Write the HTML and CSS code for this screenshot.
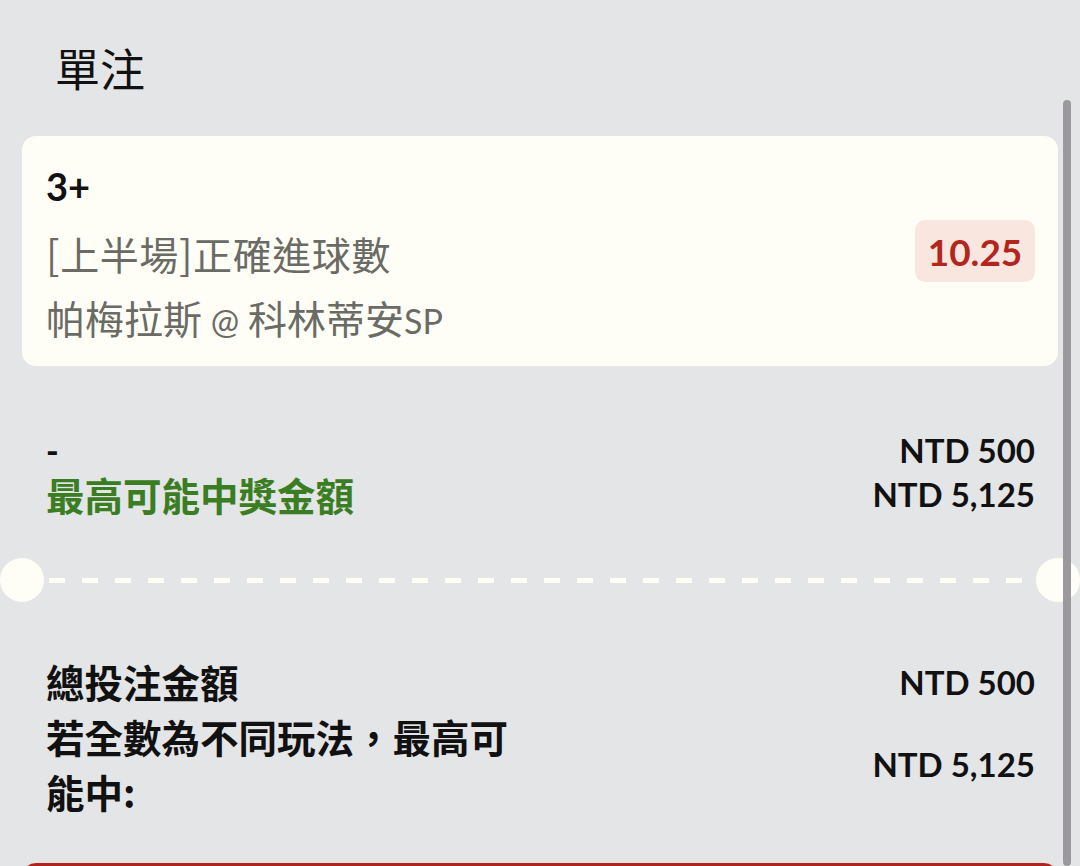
FILE: index.html
```html
<!DOCTYPE html>
<html lang="zh-Hant">
<head>
<meta charset="utf-8">
<title>單注</title>
<link rel="stylesheet" href="styles.css">
</head>
<body>
<div class="screen">
  <main class="content">
    <h1 class="title">單注</h1>
    <section class="card">
      <div class="card-info">
        <div class="pick">3+</div>
        <div class="market"><span class="br">[</span>上半場<span class="br">]</span>正確進球數</div>
        <div class="match">帕梅拉斯 <span class="lat">@</span> 科林蒂安<span class="lat">SP</span></div>
      </div>
      <div class="odds">10.25</div>
    </section>
    <section class="stake">
      <div class="row"><span class="dash">-</span><span class="amt">NTD 500</span></div>
      <div class="row"><span class="win">最高可能中獎金額</span><span class="amt">NTD 5,125</span></div>
    </section>
    <div class="divider"><span class="notch"></span><span class="dashes"></span><span class="notch"></span></div>
    <section class="summary">
      <div class="sum-row"><span class="label">總投注金額</span><span class="amt">NTD 500</span></div>
      <div class="sum-row"><span class="label wrap">若全數為不同玩法，最高可能中:</span><span class="amt">NTD 5,125</span></div>
    </section>
    <div class="place-btn"></div>
  </main>
  <div class="scrollbar"></div>
</div>
</body>
</html>
```

FILE: styles.css
```css
* { box-sizing: border-box; }
html, body { margin: 0; padding: 0; }
body {
  background: #e4e5e7;
  font-family: Lato, "Noto Sans CJK TC", sans-serif;
  color: #111;
  overflow: hidden;
}
.screen {
  position: relative;
  width: 1080px;
  height: 866px;
  overflow: hidden;
}
.content {
  display: flex;
  flex-direction: column;
}
.title {
  margin: 0;
  height: 136px;
  padding: 44px 0 0 55px;
  font-family: "Noto Sans CJK TC", sans-serif;
  font-weight: 400;
  font-size: 45px;
  line-height: 48px;
  color: #111;
}
.card {
  margin: 0 22px;
  height: 230px;
  flex: none;
  background: #fffef6;
  border-radius: 14px;
  display: flex;
  align-items: center;
  justify-content: space-between;
  padding: 0 23px 0 24px;
}
.card-info {
  padding: 27px 0 14px;
  display: flex;
  flex-direction: column;
}
.pick {
  font-family: Lato, sans-serif;
  font-weight: 700;
  font-size: 38px;
  line-height: 48px;
  color: #111;
  margin-bottom: 11px;
}
.market, .match {
  font-family: "Noto Sans CJK TC", sans-serif;
  font-size: 39px;
  line-height: 64px;
  color: #6b6b66;
  font-weight: 400;
}
.market { letter-spacing: 0.6px; }
.br { font-size: 40px; }
.lat {
  font-family: Lato, sans-serif;
  font-size: 34px;
}
.odds {
  width: 120px;
  height: 62px;
  border-radius: 10px;
  background: #f8e6df;
  color: #b3261e;
  font-family: Lato, sans-serif;
  font-weight: 700;
  font-size: 37px;
  display: flex;
  align-items: center;
  justify-content: center;
}
.stake {
  margin-top: 62px;
  padding: 0 45px 0 46px;
  display: flex;
  flex-direction: column;
}
.row {
  display: flex;
  justify-content: space-between;
  align-items: center;
  height: 44px;
}
.dash {
  font-family: Lato, sans-serif;
  font-weight: 900;
  font-size: 34px;
  line-height: 30px;
}
.amt {
  font-family: Lato, sans-serif;
  font-weight: 700;
  font-size: 33px;
  line-height: 40px;
  color: #111;
}
.win {
  font-family: "Noto Sans CJK TC", sans-serif;
  font-weight: 700;
  font-size: 38.5px;
  color: #3a7d22;
  line-height: 44px;
}
.divider {
  margin-top: 42px;
  height: 44px;
  display: flex;
  align-items: center;
}
.notch {
  width: 44px;
  height: 44px;
  border-radius: 50%;
  background: #fffef6;
  flex: none;
}
.dashes {
  flex: 1;
  margin: 0 5px;
  height: 5px;
  background: repeating-linear-gradient(90deg, #fffef6 0 16px, transparent 16px 33px);
}
.summary {
  margin-top: 52px;
  padding: 0 45px 0 46px;
  display: flex;
  flex-direction: column;
}
.sum-row {
  display: flex;
  justify-content: space-between;
  align-items: center;
}
.label {
  font-family: "Noto Sans CJK TC", sans-serif;
  font-weight: 700;
  font-size: 38.5px;
  line-height: 55px;
  color: #111;
}
.label.wrap { width: 480px; }
.place-btn {
  margin: 44px 22px 0;
  height: 60px;
  flex: none;
  border-radius: 14px;
  background: #b0241d;
}
.scrollbar {
  position: absolute;
  left: 1063px;
  top: 100px;
  bottom: 0;
  width: 8px;
  border-radius: 4px;
  background: #9a9a9e;
}
```
